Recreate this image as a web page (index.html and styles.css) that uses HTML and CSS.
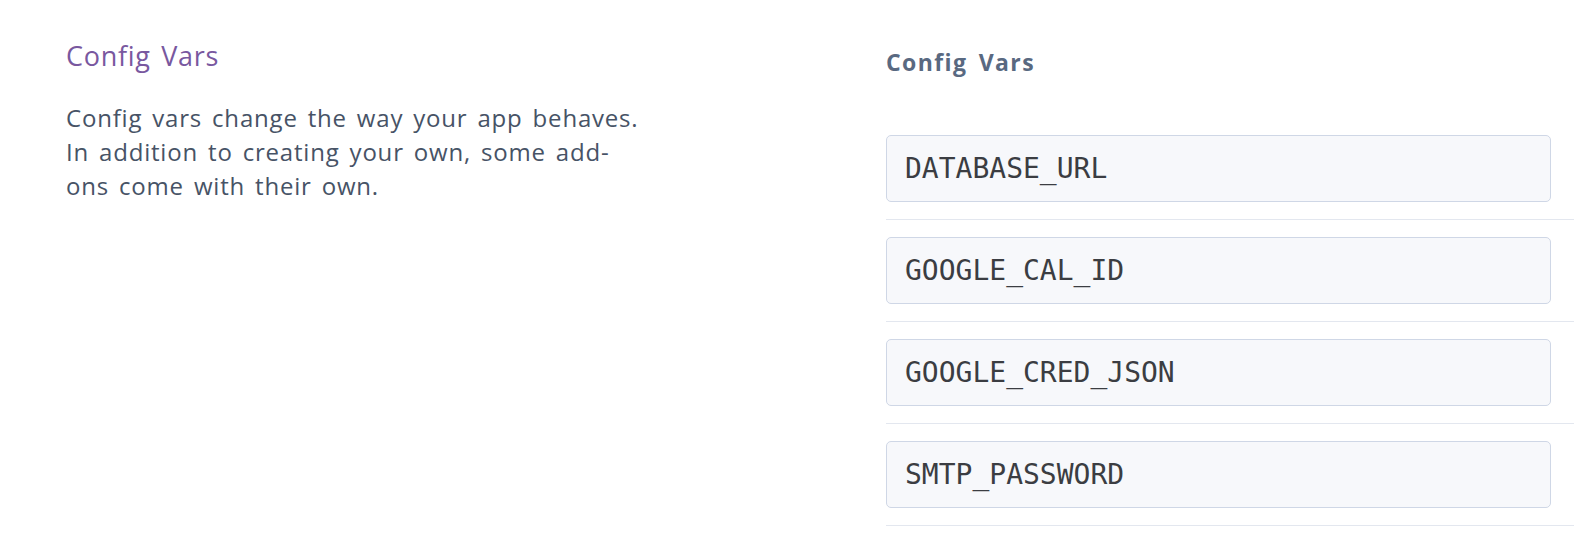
FILE: index.html
```html
<!DOCTYPE html>
<html lang="en">
<head>
<meta charset="utf-8">
<title>Config Vars</title>
<link rel="stylesheet" href="styles.css">
</head>
<body>
<div class="page">
  <section class="intro">
    <h2 class="intro-title">Config Vars</h2>
    <p class="intro-text">Config vars change the way your app behaves. In addition to creating your own, some add-ons come with their own.</p>
  </section>
  <section class="vars">
    <h3 class="vars-title">Config Vars</h3>
    <ul class="var-list">
      <li class="var-row"><div class="var-key">DATABASE_URL</div></li>
      <li class="var-row"><div class="var-key">GOOGLE_CAL_ID</div></li>
      <li class="var-row"><div class="var-key">GOOGLE_CRED_JSON</div></li>
      <li class="var-row"><div class="var-key">SMTP_PASSWORD</div></li>
    </ul>
  </section>
</div>
</body>
</html>
```
FILE: styles.css
```css
html, body {
  margin: 0;
  padding: 0;
  background: #ffffff;
}
body {
  font-family: "Open Sans", Lato, sans-serif;
}
.page {
  display: flex;
  padding-left: 66px;
}
.intro {
  width: 820px;
  flex: none;
  padding-top: 39px;
}
.intro-title {
  margin: 0;
  font-size: 27px;
  line-height: 34px;
  font-weight: 400;
  letter-spacing: 0.7px;
  word-spacing: 3px;
  color: #79589f;
}
.intro-text {
  margin: 28px 0 0;
  width: 580px;
  font-size: 24px;
  line-height: 34px;
  letter-spacing: 0.8px;
  word-spacing: 3px;
  color: #475366;
}
.vars {
  flex: 1;
  padding-top: 47px;
}
.vars-title {
  margin: 0;
  font-size: 23px;
  line-height: 30px;
  font-weight: 700;
  letter-spacing: 1.4px;
  word-spacing: 4px;
  color: #596981;
}
.var-list {
  list-style: none;
  margin: 58px 0 0;
  padding: 0;
}
.var-row {
  padding-bottom: 17px;
  margin-bottom: 17px;
  border-bottom: 1px solid #e3e7ef;
}
.var-key {
  box-sizing: border-box;
  width: 665px;
  height: 67px;
  display: flex;
  align-items: center;
  padding: 0 18px;
  background: #f7f8fb;
  border: 1px solid #cfd7e6;
  border-radius: 5px;
  font-family: "DejaVu Sans Mono", monospace;
  font-size: 28px;
  color: #3b3d42;
}
```
